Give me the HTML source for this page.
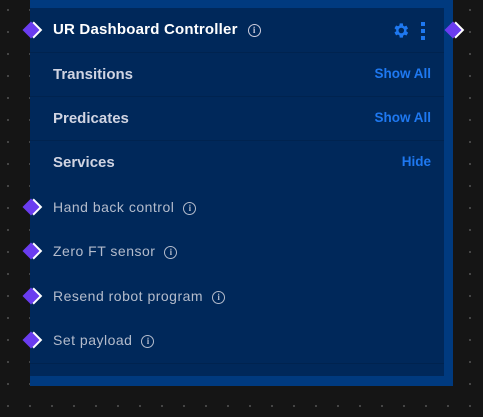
<!DOCTYPE html><html><head><style>
body{margin:0;width:483px;height:417px;overflow:hidden;background:#151515;
background-image:radial-gradient(circle,#555 0.8px,transparent 1px);background-size:22px 22px;background-position:-3px -1px;
font-family:"Liberation Sans",sans-serif;position:relative}
.outer{position:absolute;left:30px;top:0;width:423px;height:386px;background:#003a7f}
.inner{position:absolute;left:30px;top:8px;width:414px;height:368px;background:#00285a}
.t{position:absolute;white-space:nowrap}
.sec{left:53px;color:#d0d4e2;font-weight:bold;font-size:15px}
.lnk{right:52px;color:#1e78f0;font-weight:bold;font-size:13.5px}
.it{left:53px;color:#b4bccc;font-size:14px;letter-spacing:0.5px}
.i{display:inline-block;width:11px;height:11px;border:1.3px solid #b4bccc;border-radius:50%;font-size:9px;line-height:11px;text-align:center;margin-left:9px;vertical-align:1px;font-weight:bold;font-family:"Liberation Serif",serif;letter-spacing:0}
.d{position:absolute;width:12px;height:12px;background:#6a3cf0;transform:rotate(45deg);box-shadow:2px -2px 0 #fff}
.line{position:absolute;left:30px;width:414px;height:1px;background:#00234f}
</style></head><body>
<div class="outer"></div><div class="inner"></div>
<div class="line" style="top:52px"></div><div class="line" style="top:96px"></div><div class="line" style="top:140px"></div><div class="line" style="top:363px"></div>
<div class="t" style="left:53px;top:21px;color:#fff;font-weight:bold;font-size:15px;letter-spacing:0.2px">UR Dashboard Controller<span class="i" style="border-color:#ccd;color:#ccd;margin-left:10px">i</span></div>
<svg class="t" style="left:391px;top:21px" width="19" height="19" viewBox="0 0 24 24"><path fill="#1e78f0" d="M19.4 13a7.5 7.5 0 000-2l2.1-1.6-2-3.5-2.5 1a7 7 0 00-1.7-1L15 3h-4l-.4 2.7a7 7 0 00-1.7 1l-2.5-1-2 3.5L6.6 11a7.5 7.5 0 000 2l-2.2 1.6 2 3.5 2.5-1a7 7 0 001.7 1L11 21h4l.4-2.7a7 7 0 001.7-1l2.5 1 2-3.5zM13 15.5a3.5 3.5 0 110-7 3.5 3.5 0 010 7z"/></svg>
<div class="t" style="left:421px;top:22px;width:4px;height:4px;background:#1e78f0"></div>
<div class="t" style="left:421px;top:29px;width:4px;height:4px;background:#1e78f0"></div>
<div class="t" style="left:421px;top:36px;width:4px;height:4px;background:#1e78f0"></div>
<div class="t sec" style="top:66px">Transitions</div><div class="t lnk" style="top:66px">Show All</div>
<div class="t sec" style="top:110px">Predicates</div><div class="t lnk" style="top:110px">Show All</div>
<div class="t sec" style="top:154px">Services</div><div class="t lnk" style="top:154px">Hide</div>
<div class="t it" style="top:199px">Hand back control<span class="i">i</span></div>
<div class="t it" style="top:243px">Zero FT sensor<span class="i">i</span></div>
<div class="t it" style="top:288px">Resend robot program<span class="i">i</span></div>
<div class="t it" style="top:332px">Set payload<span class="i">i</span></div>
<div class="d" style="left:25px;top:24px"></div><div class="d" style="left:447px;top:24px"></div>
<div class="d" style="left:25px;top:201px"></div><div class="d" style="left:25px;top:245px"></div>
<div class="d" style="left:25px;top:290px"></div><div class="d" style="left:25px;top:334px"></div>
</body></html>
